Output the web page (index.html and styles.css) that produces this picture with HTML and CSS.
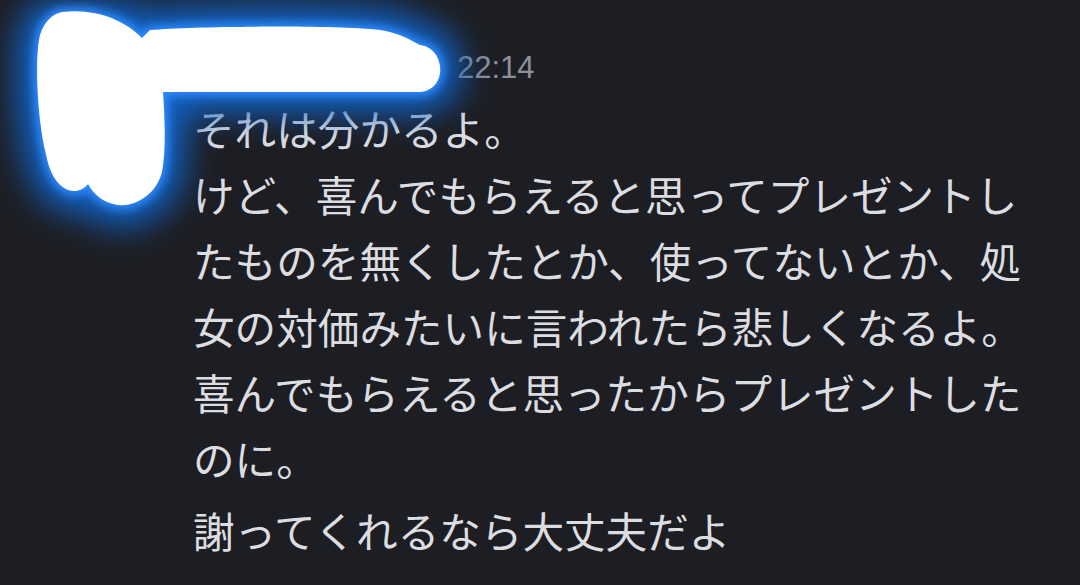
FILE: index.html
```html
<!DOCTYPE html>
<html lang="ja">
<head>
<meta charset="utf-8">
<link rel="stylesheet" href="styles.css">
</head>
<body>
<div class="chat">
  <div class="message">
    <div class="avatar-col"></div>
    <div class="content">
      <div class="header">
        <span class="name">ユーザー</span>
        <span class="time">22:14</span>
      </div>
      <p class="text">それは分かるよ。<br>けど、喜んでもらえると思ってプレゼントし<br>たものを無くしたとか、使ってないとか、処<br>女の対価みたいに言われたら悲しくなるよ。<br>喜んでもらえると思ったからプレゼントした<br>のに。</p>
      <p class="text second">謝ってくれるなら大丈夫だよ</p>
    </div>
  </div>
  <svg class="redact glow-wide" width="1080" height="585" viewBox="0 0 1080 585" aria-hidden="true">
    <path class="blob-wide" d="M 62 12 C 95 8, 125 20, 142 38 L 150 30 C 200 26, 330 25, 380 30 C 400 33, 410 40, 420 45 C 446 48, 448 90, 420 92 L 163 92 C 165 120, 166 150, 162 172 C 156 195, 135 207, 118 205 C 104 203, 94 195, 88 184 C 82 192, 72 193, 64 188 C 52 180, 48 165, 45 150 C 38 120, 34 60, 40 35 C 45 20, 53 14, 62 12 Z"/>
  </svg>
  <svg class="redact glow-tight" width="1080" height="585" viewBox="0 0 1080 585" aria-hidden="true">
    <path class="blob-tight" d="M 62 12 C 95 8, 125 20, 142 38 L 150 30 C 200 26, 330 25, 380 30 C 400 33, 410 40, 420 45 C 446 48, 448 90, 420 92 L 163 92 C 165 120, 166 150, 162 172 C 156 195, 135 207, 118 205 C 104 203, 94 195, 88 184 C 82 192, 72 193, 64 188 C 52 180, 48 165, 45 150 C 38 120, 34 60, 40 35 C 45 20, 53 14, 62 12 Z"/>
  </svg>
  <svg class="redact" width="1080" height="585" viewBox="0 0 1080 585" aria-hidden="true">
    <path fill="#ffffff" d="M 62 12 C 95 8, 125 20, 142 38 L 150 30 C 200 26, 330 25, 380 30 C 400 33, 410 40, 420 45 C 446 48, 448 90, 420 92 L 163 92 C 165 120, 166 150, 162 172 C 156 195, 135 207, 118 205 C 104 203, 94 195, 88 184 C 82 192, 72 193, 64 188 C 52 180, 48 165, 45 150 C 38 120, 34 60, 40 35 C 45 20, 53 14, 62 12 Z"/>
  </svg>
</div>
</body>
</html>
```
FILE: styles.css
```css
html, body {
  margin: 0;
  padding: 0;
  background: #1d1e23;
  width: 1080px;
  height: 585px;
  overflow: hidden;
}
.chat {
  position: relative;
  width: 1080px;
  height: 585px;
  font-family: "Noto Sans CJK JP", "Noto Sans", sans-serif;
  color: #dcdde1;
}
.message {
  display: flex;
  padding-top: 40px;
}
.avatar-col {
  width: 193px;
  flex: none;
}
.content {
  flex: 1;
}
.header {
  display: flex;
  align-items: center;
  height: 55px;
  gap: 14px;
}
.name {
  font-size: 28px;
  color: #ffffff;
  width: 250px;
}
.time {
  font-family: "Liberation Sans", Arial, sans-serif;
  font-size: 31px;
  color: #8b909a;
}
.text {
  margin: 0;
  font-size: 41.6px;
  line-height: 66px;
  white-space: nowrap;
}
.text.second {
  margin-top: 6px;
}
.redact {
  position: absolute;
  left: 0;
  top: 0;
}
.blob-wide {
  fill: #1160c0;
  stroke: #1160c0;
  stroke-width: 44px;
  stroke-linejoin: round;
}
.glow-wide {
  filter: blur(16px);
}
.blob-tight {
  fill: #2f8bff;
  stroke: #2f8bff;
  stroke-width: 8px;
  stroke-linejoin: round;
}
.glow-tight {
  filter: blur(5px);
}
```
